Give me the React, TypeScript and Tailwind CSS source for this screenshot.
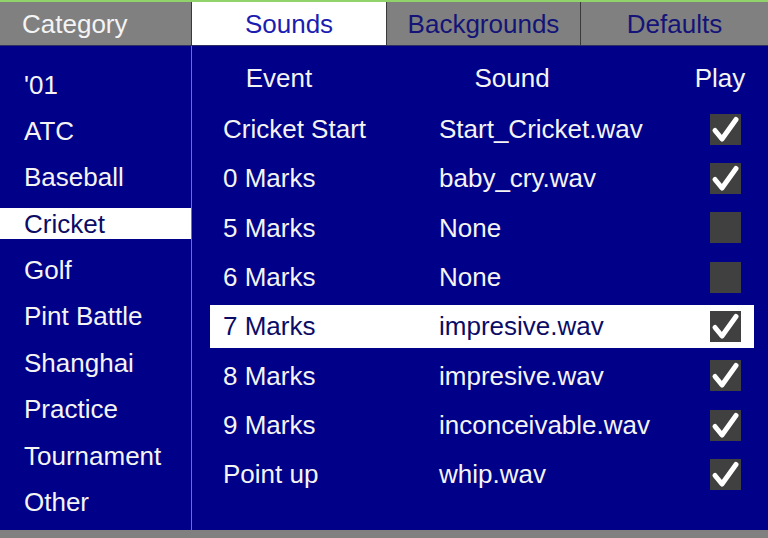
import React from 'react';

const categories = ["'01", 'ATC', 'Baseball', 'Cricket', 'Golf', 'Pint Battle', 'Shanghai', 'Practice', 'Tournament', 'Other'];

const rows = [
  { event: 'Cricket Start', sound: 'Start_Cricket.wav', play: true },
  { event: '0 Marks', sound: 'baby_cry.wav', play: true },
  { event: '5 Marks', sound: 'None', play: false },
  { event: '6 Marks', sound: 'None', play: false },
  { event: '7 Marks', sound: 'impresive.wav', play: true },
  { event: '8 Marks', sound: 'impresive.wav', play: true },
  { event: '9 Marks', sound: 'inconceivable.wav', play: true },
  { event: 'Point up', sound: 'whip.wav', play: true },
];

function CheckBox({ checked }: { checked: boolean }) {
  return (
    <div className="w-[31px] h-[31px] bg-[#404040] flex items-center justify-center">
      {checked && (
        <svg width="31" height="31" viewBox="0 0 31 31">
          <path d="M5 16.5 L12 25 L26 5.5" fill="none" stroke="#ffffff" strokeWidth="5" strokeLinecap="round" strokeLinejoin="round" />
        </svg>
      )}
    </div>
  );
}

export default function App() {
  const selectedCategory = 'Cricket';
  const selectedRow = 4;

  return (
    <div className="w-[768px] h-[538px] flex flex-col bg-[#000088] text-[26px] leading-none text-[#f4f4f4] font-['Liberation_Sans',Arial,sans-serif] overflow-hidden">
      <div className="h-[2px] bg-[#8fd36a]" />
      <div className="h-[44px] flex bg-[#808080] border-b border-[#303060]">
        <div className="w-[191px] flex items-center pl-[22px] text-[#f4f4f4]">Category</div>
        <div className="w-px bg-[#3a3a3a]" />
        <div className="w-[194px] bg-white flex items-center justify-center text-[#1c1cb0]">Sounds</div>
        <div className="w-px bg-[#3a3a3a]" />
        <div className="w-[193px] flex items-center justify-center text-[#141478]">Backgrounds</div>
        <div className="w-px bg-[#3a3a3a]" />
        <div className="flex-1 flex items-center justify-center text-[#141478]">Defaults</div>
      </div>

      <div className="flex-1 flex">
        <div className="w-[191px] flex flex-col gap-[15.4px] pt-[23px]">
          {categories.map((c) => (
            <div
              key={c}
              className={
                'h-[31px] flex items-center pl-[24px] ' +
                (c === selectedCategory ? 'bg-white text-[#0c0c66]' : '')
              }
            >
              {c}
            </div>
          ))}
        </div>
        <div className="w-px bg-[#7070b8]" />

        <div className="flex-1 flex flex-col pl-[18px]">
          <div className="h-[43px] mt-[10px] flex items-center">
            <span className="w-[138px] text-center">Event</span>
            <span className="w-[328px] text-center">Sound</span>
            <span className="w-[88px] text-center">Play</span>
          </div>
          <div className="flex flex-col gap-[6.35px] mt-[8.5px]">
            {rows.map((r, i) => (
              <div
                key={r.event}
                className={
                  'w-[544px] h-[43px] flex items-center pl-[13px] ' +
                  (i === selectedRow ? 'bg-white text-[#0c0c66]' : '')
                }
              >
                <span className="w-[216px]">{r.event}</span>
                <span className="w-[271px]">{r.sound}</span>
                <CheckBox checked={r.play} />
              </div>
            ))}
          </div>
        </div>
      </div>

      <div className="h-[8px] bg-[#808080]" />
    </div>
  );
}
